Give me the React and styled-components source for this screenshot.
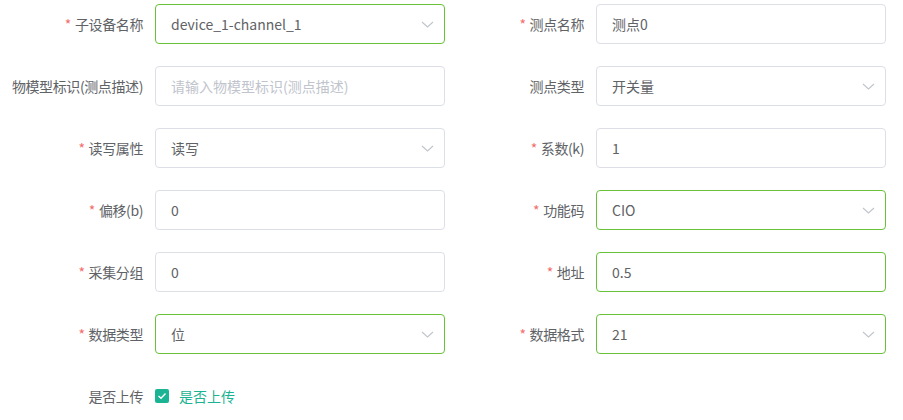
import React from 'react';
import styled, { createGlobalStyle } from 'styled-components';

const GlobalStyle = createGlobalStyle`
  body {
    margin: 0;
    background: #ffffff;
    font-family: "Noto Sans CJK SC", "Noto Sans", sans-serif;
  }
`;

const Form = styled.div`
  display: grid;
  grid-template-columns: 435px 435px;
  column-gap: 6px;
  row-gap: 22px;
  padding: 4px 0 0 10px;
  width: 903px;
  box-sizing: border-box;
`;

const Item = styled.div`
  display: flex;
  align-items: center;
  height: 40px;
`;

const Label = styled.label`
  flex: 0 0 145px;
  box-sizing: border-box;
  padding-right: 12px;
  text-align: right;
  font-size: 14px;
  line-height: 40px;
  color: #606266;
  white-space: nowrap;
  letter-spacing: -0.4px;
  &::before {
    content: ${p => (p.$required ? '"*"' : 'none')};
    color: #f56c6c;
    margin-right: 4px;
  }
`;

const Field = styled.div`
  position: relative;
  flex: 0 0 290px;
  height: 40px;
  box-sizing: border-box;
  border: 1px solid ${p => (p.$success ? '#67c23a' : '#dcdfe6')};
  border-radius: 4px;
  display: flex;
  align-items: center;
  padding: 0 30px 1px 15px;
  font-size: 14px;
  color: ${p => (p.$placeholder ? '#c0c4cc' : '#606266')};
`;

const Arrow = styled.svg`
  position: absolute;
  right: 10px;
  top: 50%;
  margin-top: -6px;
  width: 13px;
  height: 12px;
`;

const CheckRow = styled(Item)`
  grid-column: 1 / 2;
`;

const Check = styled.span`
  display: flex;
  align-items: center;
  gap: 10px;
  font-size: 14px;
  color: #1ab394;
`;

const Box = styled.span`
  display: flex;
  align-items: center;
  justify-content: center;
  width: 14px;
  height: 14px;
  border-radius: 2px;
  background: #1ab394;
`;

const fields = [
  { label: '子设备名称', value: 'device_1-channel_1', required: true, select: true, success: true },
  { label: '测点名称', value: '测点0', required: true },
  { label: '物模型标识(测点描述)', placeholder: '请输入物模型标识(测点描述)' },
  { label: '测点类型', value: '开关量', select: true },
  { label: '读写属性', value: '读写', required: true, select: true },
  { label: '系数(k)', value: '1', required: true },
  { label: '偏移(b)', value: '0', required: true },
  { label: '功能码', value: 'CIO', required: true, select: true, success: true },
  { label: '采集分组', value: '0', required: true },
  { label: '地址', value: '0.5', required: true, success: true },
  { label: '数据类型', value: '位', required: true, select: true, success: true },
  { label: '数据格式', value: '21', required: true, select: true, success: true },
];

const Chevron = () => (
  <Arrow viewBox="0 0 13 12">
    <path d="M1 4 L6.5 9 L12 4" fill="none" stroke="#c0c4cc" strokeWidth="1.1" />
  </Arrow>
);

const App = () => (
  <>
    <GlobalStyle />
    <Form>
      {fields.map(f => (
        <Item key={f.label}>
          <Label $required={f.required}>{f.label}</Label>
          <Field $success={f.success} $placeholder={!f.value}>
            {f.value || f.placeholder}
            {f.select && <Chevron />}
          </Field>
        </Item>
      ))}
      <CheckRow>
        <Label>是否上传</Label>
        <Check>
          <Box>
            <svg width="10" height="8" viewBox="0 0 10 8">
              <path d="M1.5 4 L4 6.3 L8.5 1.5" fill="none" stroke="#fff" strokeWidth="1.4" />
            </svg>
          </Box>
          是否上传
        </Check>
      </CheckRow>
    </Form>
  </>
);

export default App;
